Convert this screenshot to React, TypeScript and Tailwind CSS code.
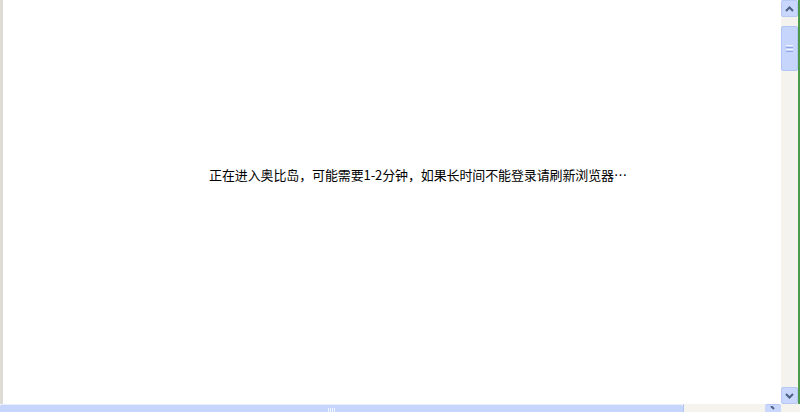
export default function App() {
  return (
    <div className="flex h-[412px] w-[800px] flex-col overflow-hidden bg-white">
      <div className="flex h-[404px]">
        <div className="w-[3px] bg-[#dcdbd6]" />
        <main className="flex-1 pl-[206px] pt-[167px]">
          <p
            className="text-[13px] leading-[16px] tracking-[-0.12px] text-black"
            style={{ fontFamily: '"Noto Sans CJK SC", sans-serif' }}
          >
            正在进入奥比岛，可能需要1-2分钟，如果长时间不能登录请刷新浏览器…
          </p>
        </main>
        {/* vertical scrollbar */}
        <div className="flex w-[17px] flex-col bg-[#f4f3ee]">
          <div className="flex h-[17px] items-center justify-center rounded-[2px] border border-[#b7c8f2] bg-[#c8d7fb]">
            <svg width="9" height="6" viewBox="0 0 9 6">
              <path d="M1 5 L4.5 1.5 L8 5" fill="none" stroke="#4d6185" strokeWidth="2" />
            </svg>
          </div>
          <div className="h-[9px]" />
          <div className="flex h-[45px] items-center justify-center rounded-[2px] border border-[#b2c5f3] bg-[#c6d5fb]">
            <div className="flex flex-col gap-[1px]">
              <div className="h-[1px] w-[7px] bg-[#eef3fe]" />
              <div className="h-[1px] w-[7px] bg-[#8ea6e6]" />
              <div className="h-[1px] w-[7px] bg-[#eef3fe]" />
              <div className="h-[1px] w-[7px] bg-[#8ea6e6]" />
            </div>
          </div>
          <div className="flex-1" />
          <div className="flex h-[17px] items-center justify-center rounded-[2px] border border-[#b7c8f2] bg-[#c8d7fb]">
            <svg width="9" height="6" viewBox="0 0 9 6">
              <path d="M1 1 L4.5 4.5 L8 1" fill="none" stroke="#4d6185" strokeWidth="2" />
            </svg>
          </div>
        </div>
        <div className="w-[2px] bg-[#4c9a4c]" />
      </div>
      {/* horizontal scrollbar */}
      <div className="flex h-[8px]">
        <div className="flex w-[683px] justify-center rounded-t-[2px] border-t border-[#e8eefc] bg-[#c6d5fb]">
          <div className="ml-[-20px] mt-[3px] flex gap-[1px]">
            <div className="h-[4px] w-[1px] bg-[#eef3fe]" />
            <div className="h-[4px] w-[1px] bg-[#eef3fe]" />
            <div className="h-[4px] w-[1px] bg-[#eef3fe]" />
            <div className="h-[4px] w-[1px] bg-[#eef3fe]" />
          </div>
        </div>
        <div className="w-[82px] border-l border-[#b2c5f3] bg-[#f4f3ee]" />
        <div className="flex w-[16px] justify-center rounded-t-[2px] border-t border-[#b7c8f2] bg-[#c8d7fb]">
          <svg width="6" height="6" viewBox="0 0 6 6" className="mt-[1px]">
            <path d="M1 0 L4 3" fill="none" stroke="#4d6185" strokeWidth="2" />
          </svg>
        </div>
        <div className="flex-1 bg-[#f4f3ee]" />
      </div>
    </div>
  );
}
